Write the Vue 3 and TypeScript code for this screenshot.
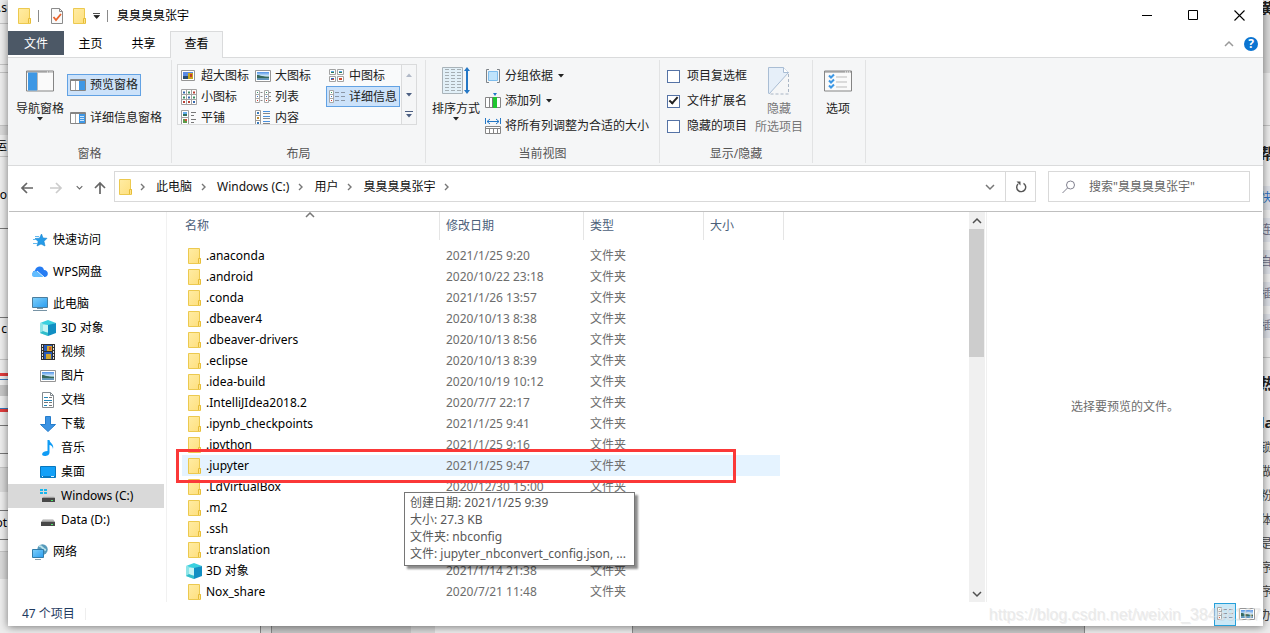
<script setup lang="ts">
import { ref } from 'vue'

interface Strip { size: number; kind: string; text?: string }
interface NavItem { label: string; icon: string; child?: boolean; selected?: boolean; gap?: boolean }
interface FileRow { name: string; date: string; type: string; icon: string; hover?: boolean }

const user = '臭臭臭臭张宇'
const search = ref('')
const showItemBoxes = ref(false)
const showExtensions = ref(true)
const showHidden = ref(false)

const layouts = [
  { label: '超大图标', icon: 'i-xlarge' }, { label: '大图标', icon: 'i-picture' }, { label: '中图标', icon: 'i-medium' },
  { label: '小图标', icon: 'i-small' }, { label: '列表', icon: 'i-list' }, { label: '详细信息', icon: 'i-details' },
  { label: '平铺', icon: 'i-tiles' }, { label: '内容', icon: 'i-content' },
]

const crumbs = ['此电脑', 'Windows (C:)', '用户', user]

const nav: NavItem[] = [
  { label: '快速访问', icon: 'i-star' },
  { label: 'WPS网盘', icon: 'i-cloud', gap: true },
  { label: '此电脑', icon: 'i-pc', gap: true },
  { label: '3D 对象', icon: 'i-cube', child: true },
  { label: '视频', icon: 'i-video', child: true },
  { label: '图片', icon: 'i-picture', child: true },
  { label: '文档', icon: 'i-doc', child: true },
  { label: '下载', icon: 'i-download', child: true },
  { label: '音乐', icon: 'i-music', child: true },
  { label: '桌面', icon: 'i-desktop', child: true },
  { label: 'Windows (C:)', icon: 'i-windrive', child: true, selected: true },
  { label: 'Data (D:)', icon: 'i-drive', child: true },
  { label: '网络', icon: 'i-network', gap: true },
]

const f = (name: string, date = '', icon = 'i-folder', hover = false): FileRow => ({ name, date, type: date ? '文件夹' : '', icon, hover })
const files: FileRow[] = [
  f('.anaconda', '2021/1/25 9:20'),
  f('.android', '2020/10/22 23:18'),
  f('.conda', '2021/1/26 13:57'),
  f('.dbeaver4', '2020/10/13 8:38'),
  f('.dbeaver-drivers', '2020/10/13 8:56'),
  f('.eclipse', '2020/10/13 8:39'),
  f('.idea-build', '2020/10/19 10:12'),
  f('.IntelliJIdea2018.2', '2020/7/7 22:17'),
  f('.ipynb_checkpoints', '2021/1/25 9:41'),
  f('.ipython', '2021/1/25 9:16'),
  f('.jupyter', '2021/1/25 9:47', 'i-folder', true),
  f('.LdVirtualBox', '2020/12/30 15:00'),
  f('.m2'),
  f('.ssh'),
  f('.translation'),
  f('3D 对象', '2021/1/14 21:38', 'i-cube'),
  f('Nox_share', '2020/7/21 11:48'),
]

const leftStrip: Strip[] = [
  { size: 15, kind: 'plain', text: '.s' }, { size: 9, kind: 'line' }, { size: 41, kind: 'line' }, { size: 8, kind: 'line' },
  { size: 53, kind: 'line' }, { size: 9, kind: 'grey' }, { size: 22, kind: 'line', text: '运' }, { size: 28, kind: 'plain' },
  { size: 20, kind: 'plain', text: 'o' }, { size: 24, kind: 'dark' }, { size: 89, kind: 'dark' }, { size: 22, kind: 'plain', text: 'c' },
  { size: 20, kind: 'line' }, { size: 13, kind: 'plain' }, { size: 3, kind: 'red' }, { size: 3, kind: 'plain' }, { size: 1, kind: 'blue' },
  { size: 5, kind: 'plain' }, { size: 11, kind: 'mid' }, { size: 12, kind: 'plain' }, { size: 1, kind: 'blue' }, { size: 3, kind: 'red' },
  { size: 14, kind: 'dark' }, { size: 28, kind: 'dark' }, { size: 14, kind: 'line' }, { size: 24, kind: 'grey' }, { size: 19, kind: 'dark' },
  { size: 23, kind: 'plain', text: 'ot' }, { size: 6, kind: 'dark' }, { size: 12, kind: 'line' }, { size: 27, kind: 'grey' }, { size: 50, kind: 'plain' },
]
const rightStrip: Strip[] = [
  { size: 15, kind: 'bold', text: '黄' }, { size: 58, kind: 'grey' }, { size: 53, kind: 'line' }, { size: 16, kind: 'plain' },
  { size: 22, kind: 'bold', text: '帮' }, { size: 22, kind: 'plain' }, { size: 24, kind: 'link', text: '快' }, { size: 8, kind: 'plain' },
  { size: 24, kind: 'tag', text: '连' }, { size: 8, kind: 'plain' }, { size: 24, kind: 'tag', text: '自' }, { size: 8, kind: 'plain' },
  { size: 24, kind: 'tag', text: '插' }, { size: 8, kind: 'plain' }, { size: 24, kind: 'tag', text: '插' }, { size: 20, kind: 'line' },
  { size: 14, kind: 'plain' }, { size: 22, kind: 'bold', text: '热' }, { size: 16, kind: 'plain' }, { size: 24, kind: 'bold', text: 'la' },
  { size: 2, kind: 'plain' }, { size: 24, kind: 'plain', text: '锁' }, { size: 24, kind: 'plain', text: '做' }, { size: 24, kind: 'plain', text: '粉' },
  { size: 24, kind: 'plain', text: '体' }, { size: 24, kind: 'plain', text: '是' }, { size: 24, kind: 'plain', text: '序' },
  { size: 24, kind: 'plain', text: '序' }, { size: 24, kind: 'plain', text: '办' },
]
const bottomStrip: Strip[] = [
  { size: 261, kind: 'plain' }, { size: 10, kind: 'grey' }, { size: 139, kind: 'mid open' }, { size: 24, kind: 'grey open' },
  { size: 198, kind: 'plain' }, { size: 452, kind: 'mid' }, { size: 186, kind: 'plain open' },
]
</script>

<template>
  <svg class="defs" aria-hidden="true">
    <defs>
      <linearGradient id="g-folder" x1="0" y1="0" x2="1" y2="1"><stop offset="0" stop-color="#ffeca4" /><stop offset="1" stop-color="#fedf7c" /></linearGradient>
      <linearGradient id="g-screen" x1="0" y1="0" x2="1" y2="1"><stop offset="0" stop-color="#7fd0fa" /><stop offset="1" stop-color="#2a9df0" /></linearGradient>
      <linearGradient id="g-sky" x1="0" y1="0" x2="0" y2="1"><stop offset="0" stop-color="#4f92e8" /><stop offset=".5" stop-color="#d4ebf8" /><stop offset=".6" stop-color="#6f9d98" /><stop offset="1" stop-color="#5d94c8" /></linearGradient>
      <linearGradient id="g-drive" x1="0" y1="0" x2="0" y2="1"><stop offset="0" stop-color="#e2e2e2" /><stop offset="1" stop-color="#8b8b8b" /></linearGradient>
    </defs>
    <symbol id="i-folder" viewBox="0 0 16 16"><path d="M2.500.5h11v10h1v5h-12z" fill="url(#g-folder)" stroke="#ecc94f" /><path d="M12.500 15v-4.500h2V15" fill="#ffe48c" stroke="#e6bd39" /></symbol>
    <symbol id="i-check-doc" viewBox="0 0 16 16"><path d="M2.500.5h8l3 3v12h-11z" fill="#fafafa" stroke="#8b8b8b" /><path d="M10.500.5v3h3" fill="none" stroke="#8b8b8b" /><path d="m4.500 9 2.500 3 5-6" fill="none" stroke="#e8632c" stroke-width="1.800" /></symbol>
    <symbol id="i-picture" viewBox="0 0 16 16"><path d="M.5 2.500h15v11H.5z" fill="#fff" stroke="#959595" /><path d="M2 4h12v8H2z" fill="url(#g-sky)" /><path d="M2 7c3 0 6 2 12 2v1H2z" fill="#37685b" /></symbol>
    <symbol id="i-xlarge" viewBox="0 0 16 16"><path d="M.5 2.500h13v10H.5z" fill="#fff" stroke="#959595" /><path d="M2 4h10v7H2z" fill="#5a8ae4" /><path d="M7 5h5v6H7z" fill="#c7a51f" /><path d="M9 6h2v3H9z" fill="#c43b28" /><path d="M2 8h5v3H2z" fill="#294c70" /></symbol>
    <symbol id="i-medium" viewBox="0 0 16 16"><g fill="#fff" stroke="#a2a2a2"><path d="M.5 1.500h6v5h-6zM8.500 1.500h6v5h-6zM.5 8.500h6v5h-6zM8.500 8.500h6v5h-6z" /></g><path d="M2 3h3v1H2zM10 3h3v1h-3z" fill="#5aa6ec" /><path d="M2 4h3v1H2zM10 4h3v1h-3z" fill="#2f7c55" /><path d="M2 10h3v2H2z" fill="#3962b5" /><path d="M3 11h2v1H3zM10 10h3v2h-3z" fill="#d14b2d" /></symbol>
    <symbol id="i-small" viewBox="0 0 16 16"><path d="M.5.5h15v15H.5zM5.500.5v15M10.500.5v15M.5 5.500h15M.5 10.500h15" fill="#fff" stroke="#a2a2a2" /><path d="M2 2.500h2v2H2zM7 7.500h2v2H7zM12 12h2v2h-2z" fill="#3467ae" /><path d="M7 2.500h2v2H7zM2 7.500h2v2H2zM12 7.500h2v2h-2z" fill="#368d60" /><path d="M12 2.500h2v2h-2zM2 12h2v2H2zM7 12h2v2H7z" fill="#b93e33" /></symbol>
    <symbol id="i-list" viewBox="0 0 16 16"><path d="M.5 1.500h4v12h-4zM9.500 1.500h4v12h-4zM.5 5.500h4M.5 9.500h4M9.500 5.500h4M9.500 9.500h4" fill="#fff" stroke="#aaa" /><path d="M5.500 3.500h2M5.500 7.500h2M5.500 11.500h2M14 3.500h2M14 7.500h2M14 11.500h2" stroke="#888" /><path d="M2 3h1v1H2zM11 3h1v1h-1z" fill="#34966a" /><path d="M2 7h1v1H2zM11 7h1v1h-1z" fill="#3775cc" /><path d="M2 11h1v1H2zM11 11h1v1h-1z" fill="#d03a2c" /></symbol>
    <symbol id="i-details" viewBox="0 0 16 16"><path d="M.5 1.500h4v12h-4zM.5 5.500h4M.5 9.500h4" fill="#fff" stroke="#a8a8a8" /><path d="M6 3.500h4M6 7.500h4M6 11.500h4M12 3.500h4M12 7.500h4M12 11.500h4" stroke="#8b97a7" /><path d="M2 3h1v1H2z" fill="#33a060" /><path d="M2 7h1v1H2z" fill="#3776c4" /><path d="M2 11h1v1H2z" fill="#d7332d" /></symbol>
    <symbol id="i-tiles" viewBox="0 0 16 16"><path d="M.5.5h7v7h-7zM.5 7.500h7v7h-7z" fill="#fff" stroke="#a0a0a0" /><path d="M2 2h4v2H2z" fill="#63acec" /><path d="M2 4h4v2H2z" fill="#316e5e" /><path d="M2 9h4v4H2z" fill="#5c9a48" /><path d="M4 9h2v2H4z" fill="#d0503b" /><path d="M10 2.500h5M10 5.500h3M10 9.500h5M10 12.500h3" stroke="#777" /></symbol>
    <symbol id="i-content" viewBox="0 0 16 16"><path d="M.5.5h5v15h-5zM.5 5.500h5M.5 10.500h5" fill="#fff" stroke="#9a9a9a" /><path d="M2 2h2v2H2zM2 12h2v2H2z" fill="#3678ba" /><path d="M2 7h2v2H2z" fill="#bc8b2e" /><path d="M8 1.500h7M8 6.500h7M8 11.500h7" stroke="#4a90dc" /><path d="M8 3.500h7M8 8.500h7M8 13.500h7" stroke="#888" /></symbol>
    <symbol id="i-navpane" viewBox="0 0 28 21"><path d="M.5.5h27v20H.5z" fill="#fafafa" stroke="#858585" /><path d="M1 1h26v1H1z" fill="#858585" /><path d="M21 1.500h1M23.500 1.500h1M25.500 1.500h1" stroke="#fff" /><path d="M2 2h9v18H2z" fill="#3d97e4" /><path d="M11.500 2v18" stroke="#b9b9b9" /></symbol>
    <symbol id="i-prevpane" viewBox="0 0 16 16"><path d="M.5 2.500h15v11H.5z" fill="#fff" stroke="#858585" /><path d="M1 3h14v1H1z" fill="#858585" /><path d="M5.500 4v9" stroke="#aaa" /><path d="M9 4h6v9H9z" fill="#3f98e6" /></symbol>
    <symbol id="i-detpane" viewBox="0 0 16 16"><path d="M.5 2.500h15v11H.5z" fill="#fff" stroke="#858585" /><path d="M1 3h14v1H1z" fill="#858585" /><path d="M5.500 4v9" stroke="#aaa" /><path d="M9 4h6v9H9z" fill="#3f98e6" /><path d="M10 6.500h4M10 8.500h4M10 10.500h4" stroke="#cfe6fb" /></symbol>
    <symbol id="i-sort" viewBox="0 0 28 28"><path d="M.5.5h20v26H.5z" fill="#f1f6f9" stroke="#a9b3b9" /><path d="M1 1h19v25H1z" fill="#d9edf7" opacity=".6" /><path d="M3 2.500h4M9 2.500h4M15 2.500h4M3 5.500h4M9 5.500h4M15 5.500h4M3 8.500h4M9 8.500h4M15 8.500h4M3 11.500h4M9 11.500h4M15 11.500h4M3 14.500h4M9 14.500h4M15 14.500h4M3 17.500h4M9 17.500h4M15 17.500h4M3 20.500h4M9 20.500h4M15 20.500h4M3 23.500h4M9 23.500h4M15 23.500h4" stroke="#a5aeb3" /><path d="M25 3v21" stroke="#2477c5" stroke-width="2" /><path d="m22 4 3-4 3 4zM22 23l3 4 3-4z" fill="#2477c5" /></symbol>
    <symbol id="i-group" viewBox="0 0 16 16"><path d="M4 1.500H1.500v13H4M12 1.500h2.500v13H12" fill="none" stroke="#7d8388" /><path d="M3.500 3.500h9v9h-9z" fill="#bfe3fb" stroke="#7dbcec" /></symbol>
    <symbol id="i-addcol" viewBox="0 0 16 16"><path d="M.5 4.500h15v10H.5zM4.500 4v11" fill="#fff" stroke="#858585" /><path d="M8 4h4v11H8z" fill="#20c630" /><path d="M7.500 4v11" stroke="#777" /><path d="M8 0h4l-2 3z" fill="#2477c5" /></symbol>
    <symbol id="i-fit" viewBox="0 0 16 16"><path d="M.5 0v6M15.500 0v6M2 3.500h12M5 1 2 3.500 5 6M11 1l3 2.500L11 6" fill="none" stroke="#2477c5" /><path d="M.5 8.500h15v7H.5zM.5 10.500h15M4.500 10.500v5M8.500 10.500v5M12.500 10.500v5" fill="#fff" stroke="#858585" /></symbol>
    <symbol id="i-hide" viewBox="0 0 22 28"><path d="M.5 26.500V.5h15l5 5L1 27" fill="#e6eff9" stroke="#a9bdd4" /><path d="M15.500.5v5h5" fill="#fff" stroke="#a9bdd4" /><path d="M20.500 7v20H1" fill="none" stroke="#a9b5c4" stroke-dasharray="3 2" /></symbol>
    <symbol id="i-options" viewBox="0 0 28 21"><path d="M.5.5h27v20H.5z" fill="#fafafa" stroke="#858585" /><path d="M1 1h26v1H1z" fill="#858585" /><path d="M21 1.500h1M23 1.500h1M25 1.500h1" stroke="#fff" /><path d="m5 5 2 2 3-3M5 10l2 2 3-3M5 15l2 2 3-3" fill="none" stroke="#3d97e4" stroke-width="2" /><path d="M12 6.500h11M12 11.500h11M12 16.500h11" stroke="#bbb" /></symbol>
    <symbol id="i-star" viewBox="0 0 16 16"><path d="m9.500 2 1.500 4 4 .3-3 3 1 4.700-4-2-4 2 1.200-4.500L3 6.500l4.500-.3z" fill="#259be8" stroke="#1683ce" stroke-width=".6" /><path d="M3 4.500h4M1 7.500h3M1 11.500h4" stroke="#62b9f0" /></symbol>
    <symbol id="i-cloud" viewBox="0 0 16 16"><path d="M3.500 13A3.300 3.300 0 0 1 3 6.500C4 1.500 11 1 12 6c5 0 5 7 .5 7z" fill="#257cf3" /><path d="M0 11c0-4 4-5 6-3l6 5H3c-2 0-3-1-3-2z" fill="#62bdff" /><path d="m5 7 7 6" stroke="#e5f5ff" /></symbol>
    <symbol id="i-pc" viewBox="0 0 16 16"><path d="M.5 1.500h15v10H.5z" fill="url(#g-screen)" stroke="#4b7d9d" /><path d="M5 12.500h6M1 14.500h14" stroke="#7793a5" /></symbol>
    <symbol id="i-cube" viewBox="0 0 16 16"><path d="M0 3 8 0l8 3-8 3z" fill="#3ad0df" /><path d="M0 3l8 2v11l-8-3z" fill="#8ee5e8" /><path d="m8 5 8-2v10l-8 3z" fill="#118fc3" /><path d="M3 5h5v7H3z" fill="#c7f5f4" /><path d="m0 13 3-2 5 2v3z" fill="#31bdcb" /></symbol>
    <symbol id="i-video" viewBox="0 0 16 16"><path d="M1 0h14v16H1z" fill="#303030" /><path d="M2.500 1v15M13.500 1v15" stroke="#e2e2e2" stroke-dasharray="2 1" /><path d="M4 1h8v6H4zM4 8h8v7H4z" fill="#285bba" /><path d="M7 2h5v5H7zM6 10h5v5H6z" fill="#d2a62c" /><path d="M9 3h2v3H9z" fill="#d24d31" /></symbol>
    <symbol id="i-doc" viewBox="0 0 16 16"><path d="M2.500.5h8l3 3v12h-11z" fill="#fff" stroke="#838b90" /><path d="M10.500.5v3h3" fill="none" stroke="#838b90" /><path d="M4 5.500h4M4 8.500h8M4 13.500h3" stroke="#2487b9" /><path d="M9 5.500h3M4 10.500h4M9 10.500h3M9 13.500h3" stroke="#777" /></symbol>
    <symbol id="i-download" viewBox="0 0 16 16"><path d="M5.500.5h5v8h5L8 15.500.5 8.500h5z" fill="#3c93e3" stroke="#257dcc" /></symbol>
    <symbol id="i-music" viewBox="0 0 16 16"><path d="M7.500 0h2c0 3 5 4 3.500 9-.5-3-2-4-3.500-4v7.500C9.500 15 7 16 5 16c-5 0-3-5 2.500-5z" fill="#109cf5" /></symbol>
    <symbol id="i-desktop" viewBox="0 0 16 16"><path d="M.5 2.500h15v11H.5z" fill="#12a0f8" stroke="#0877bd" /><path d="M1 12.500h14" stroke="#087ac4" /><path d="M2 12h1v1H2zM11 12h3v1h-3z" fill="#d9f1ff" /></symbol>
    <symbol id="i-drive" viewBox="0 0 16 16"><path d="m3 7 10 0 2 3H1z" fill="url(#g-drive)" /><path d="M1 10h14v4H1z" fill="#484848" /><path d="M11 12h2v1h-2z" fill="#4dea69" /></symbol>
    <symbol id="i-windrive" viewBox="0 0 16 16"><path d="M0 1h3v2H0zM4 1h3v2H4zM0 4h3v2H0zM4 4h3v2H4z" fill="#17b6ed" /><path d="m4 8 10 0 1 2H2z" fill="url(#g-drive)" /><path d="M2 10h13v4H2z" fill="#484848" /><path d="M11 12h2v1h-2z" fill="#4dea69" /></symbol>
    <symbol id="i-network" viewBox="0 0 16 16"><circle cx="10.500" cy="5.500" r="5.200" fill="#569abb" /><path d="M7 2c4 0 3 3 7 4" fill="none" stroke="#b9e2e9" stroke-width="2" /><path d="M.5 5.500h11v8H.5z" fill="url(#g-screen)" stroke="#317caa" /><path d="M3 15.500h6" stroke="#8ba0ac" /></symbol>
    <symbol id="i-caret" viewBox="0 0 6 4"><path d="M0 0h6L3 3.500z" fill="currentColor" /></symbol>
    <symbol id="i-chev" viewBox="0 0 10 10"><path d="m1 3 4 4 4-4" fill="none" stroke="currentColor" stroke-width="1.500" /></symbol>
    <symbol id="i-chevup" viewBox="0 0 10 10"><path d="m1 7 4-4 4 4" fill="none" stroke="currentColor" stroke-width="1.500" /></symbol>
    <symbol id="i-sep" viewBox="0 0 6 8"><path d="m1 1 3 3-3 3" fill="none" stroke="currentColor" stroke-width="1.400" /></symbol>
    <symbol id="i-arrow" viewBox="0 0 14 12"><path d="M13 6H2M7 1 2 6l5 5" fill="none" stroke="currentColor" stroke-width="1.700" /></symbol>
  </svg>

  <div class="desktop">
    <div class="strip left" aria-hidden="true">
      <div v-for="(s, i) in leftStrip" :key="i" :class="s.kind" :style="{ height: s.size + 'px' }"><span>{{ s.text }}</span></div>
    </div>

    <main class="window">
      <header class="titlebar">
        <svg class="i16"><use href="#i-folder" /></svg>
        <span class="bar"></span>
        <button class="flat first" aria-label="属性"><svg class="i16"><use href="#i-check-doc" /></svg></button>
        <button class="flat" aria-label="新建文件夹"><svg class="i16"><use href="#i-folder" /></svg></button>
        <button class="flat" aria-label="自定义快速访问工具栏"><svg width="8" height="6" viewBox="0 0 8 6"><path d="M0 .5h7M1 2.500h5.500L3.700 5.500z" fill="#222" stroke="#222" stroke-width=".8" /></svg></button>
        <span class="bar"></span>
        <h1>{{ user }}</h1>
        <div class="winbtns">
          <button class="flat" aria-label="最小化"><svg width="11" height="11"><path d="M0 5.500h10" stroke="#000" /></svg></button>
          <button class="flat" aria-label="最大化"><svg width="11" height="11"><path d="M.5.5h9v9h-9z" fill="none" stroke="#000" /></svg></button>
          <button class="flat" aria-label="关闭"><svg width="11" height="11"><path d="m.5.5 10 10m0-10-10 10" stroke="#000" stroke-width="1.100" /></svg></button>
        </div>
      </header>

      <nav class="tabs">
        <button class="tab file">文件</button>
        <button class="tab">主页</button>
        <button class="tab">共享</button>
        <button class="tab active">查看</button>
        <div class="tabs-end">
          <button class="flat muted" aria-label="最小化功能区"><svg width="10" height="10"><use href="#i-chevup" /></svg></button>
          <button class="help" aria-label="帮助">?</button>
        </div>
      </nav>

      <section class="ribbon">
        <div class="group g-panes">
          <div class="tools">
            <button class="large"><svg width="28" height="28"><use href="#i-navpane" /></svg><span>导航窗格</span><svg class="caret"><use href="#i-caret" /></svg></button>
            <div class="col panes">
              <button class="small on"><svg class="i16"><use href="#i-prevpane" /></svg>预览窗格</button>
              <button class="small"><svg class="i16"><use href="#i-detpane" /></svg>详细信息窗格</button>
            </div>
          </div>
          <p>窗格</p>
        </div>
        <div class="group g-layout">
          <div class="tools">
            <div class="gallery">
              <div class="gallery-grid">
                <button v-for="l in layouts" :key="l.label" class="small" :class="{ on: l.label === '详细信息' }"><svg class="i16"><use :href="'#' + l.icon" /></svg>{{ l.label }}</button>
              </div>
              <div class="gallery-scroll">
                <button class="flat" aria-label="上一行"><svg class="caret up"><use href="#i-caret" /></svg></button>
                <button class="flat" aria-label="下一行"><svg class="caret"><use href="#i-caret" /></svg></button>
                <button class="flat" aria-label="更多"><svg width="8" height="7" viewBox="0 0 8 7"><path d="M0 .5h8" stroke="currentColor" /><path d="M1 3h6L4 6.500z" fill="currentColor" /></svg></button>
              </div>
            </div>
          </div>
          <p>布局</p>
        </div>
        <div class="group g-view">
          <div class="tools">
            <button class="large"><svg width="28" height="28"><use href="#i-sort" /></svg><span>排序方式</span><svg class="caret"><use href="#i-caret" /></svg></button>
            <div class="col">
              <button class="small"><svg class="i16"><use href="#i-group" /></svg>分组依据<svg class="caret"><use href="#i-caret" /></svg></button>
              <button class="small"><svg class="i16"><use href="#i-addcol" /></svg>添加列<svg class="caret"><use href="#i-caret" /></svg></button>
              <button class="small"><svg class="i16"><use href="#i-fit" /></svg>将所有列调整为合适的大小</button>
            </div>
          </div>
          <p>当前视图</p>
        </div>
        <div class="group g-show">
          <div class="tools">
            <div class="col checks">
              <label><input v-model="showItemBoxes" type="checkbox" />项目复选框</label>
              <label><input v-model="showExtensions" type="checkbox" />文件扩展名</label>
              <label><input v-model="showHidden" type="checkbox" />隐藏的项目</label>
            </div>
            <button class="large dim" disabled><svg width="22" height="28"><use href="#i-hide" /></svg><span>隐藏</span><span>所选项目</span></button>
          </div>
          <p>显示/隐藏</p>
        </div>
        <div class="group g-options">
          <div class="tools">
            <button class="large"><svg width="28" height="28"><use href="#i-options" /></svg><span>选项</span></button>
          </div>
        </div>
      </section>

      <div class="address">
        <button class="flat" aria-label="后退"><svg width="14" height="12"><use href="#i-arrow" /></svg></button>
        <button class="flat faint" aria-label="前进"><svg class="flip" width="14" height="12"><use href="#i-arrow" /></svg></button>
        <button class="flat" aria-label="最近浏览的位置"><svg width="7" height="7"><use href="#i-chev" /></svg></button>
        <button class="flat" aria-label="上移"><svg width="12" height="14" viewBox="0 0 12 14"><path d="M6 13V2M1 7l5-5 5 5" fill="none" stroke="currentColor" stroke-width="1.700" /></svg></button>
        <div class="path">
          <svg class="i16"><use href="#i-folder" /></svg>
          <svg class="sep root"><use href="#i-sep" /></svg>
          <template v-for="c in crumbs" :key="c">
            <a href="#">{{ c }}</a>
            <svg class="sep"><use href="#i-sep" /></svg>
          </template>
          <button class="flat drop" aria-label="以前的位置"><svg width="10" height="10"><use href="#i-chev" /></svg></button>
          <button class="flat refresh" aria-label="刷新"><svg width="12" height="12" viewBox="0 0 12 12"><path d="M8.500 2.300A4.500 4.500 0 1 1 3 3" fill="none" stroke="currentColor" stroke-width="1.400" /><path d="M4.500.5h-4v4z" fill="currentColor" transform="rotate(90 3 3)" /></svg></button>
        </div>
        <label class="search">
          <svg width="14" height="14" viewBox="0 0 14 14"><circle cx="8.500" cy="5" r="4" fill="none" stroke="#81818f" /><path d="m5.500 8-5 5" stroke="#81818f" /></svg>
          <input v-model="search" type="text" aria-label="搜索" :placeholder="`搜索&quot;${user}&quot;`" />
        </label>
      </div>

      <div class="body">
        <nav class="tree">
          <a v-for="n in nav" :key="n.label" href="#" :class="{ child: n.child, selected: n.selected, gap: n.gap }">
            <svg class="i16"><use :href="'#' + n.icon" /></svg>{{ n.label }}
          </a>
        </nav>

        <section class="list">
          <table>
            <thead>
              <tr>
                <th class="c-name">名称<svg class="sorted" width="10" height="10"><use href="#i-chevup" /></svg></th>
                <th class="c-date">修改日期</th>
                <th class="c-type">类型</th>
                <th class="c-size">大小</th>
              </tr>
            </thead>
            <tbody>
              <tr v-for="r in files" :key="r.name" :class="{ hover: r.hover }">
                <td><div class="name"><svg class="i16"><use :href="'#' + r.icon" /></svg>{{ r.name }}</div></td>
                <td>{{ r.date }}</td>
                <td>{{ r.type }}</td>
                <td></td>
              </tr>
            </tbody>
          </table>
          <div class="marker"></div>
          <div class="tooltip" role="tooltip">
            <div>创建日期: 2021/1/25 9:39</div>
            <div>大小: 27.3 KB</div>
            <div>文件夹: nbconfig</div>
            <div>文件: jupyter_nbconvert_config.json, ...</div>
          </div>
        </section>

        <div class="scrollbar">
          <button class="flat" aria-label="向上滚动"><svg width="10" height="10"><use href="#i-chevup" /></svg></button>
          <div class="track"><div class="thumb"></div></div>
          <button class="flat" aria-label="向下滚动"><svg width="10" height="10"><use href="#i-chev" /></svg></button>
        </div>

        <aside class="preview">选择要预览的文件。</aside>
      </div>

      <footer class="status">
        <span class="count">47 个项目</span>
        <div class="modes">
          <button class="mode on" aria-label="详细信息"><svg class="i16"><use href="#i-details" /></svg></button>
          <button class="mode" aria-label="大缩略图"><svg class="i16"><use href="#i-picture" /></svg></button>
        </div>
      </footer>
    </main>

    <div class="strip right" aria-hidden="true">
      <div v-for="(s, i) in rightStrip" :key="i" :class="s.kind" :style="{ height: s.size + 'px' }"><span>{{ s.text }}</span></div>
    </div>
    <div class="bottom" aria-hidden="true">
      <div v-for="(s, i) in bottomStrip" :key="i" :class="s.kind" :style="{ flexGrow: s.size }"></div>
    </div>
    <div class="watermark">https://blog.csdn.net/weixin_38468167</div>
  </div>
</template>

<style>
body { background: #ededed; }
</style>

<style scoped>
.defs { position: absolute; width: 0; height: 0; }
.desktop {
  position: relative; display: grid; grid-template: minmax(0, 1fr) 7px / 8px minmax(0, 1fr) 7px;
  height: 100vh; overflow: hidden; background: #ededed; color: #000;
  font: 12px/16px "Noto Sans", "Noto Sans CJK SC", sans-serif;
}
button, input { font: inherit; color: inherit; margin: 0; padding: 0; }
button { border: 0; background: none; white-space: nowrap; }
a { color: inherit; text-decoration: none; }
svg { flex: none; display: block; }
.i16 { width: 16px; height: 16px; }
.caret { width: 6px; height: 4px; }
.flat { display: flex; align-items: center; justify-content: center; }
.muted { color: #999; }

.strip { overflow: hidden; min-height: 0; background: #ededed; }
.strip > div { box-sizing: border-box; display: flex; align-items: center; overflow: hidden; white-space: nowrap; }
.left > div { justify-content: flex-end; padding-right: 1px; }
.right span { margin-left: -3px; color: #444; }
.line { border-bottom: 1px solid #c4c4c4; }
.dark { border-bottom: 1px solid #777; }
.grey { background: #d9d9d9; }
.mid { background: #c6c6c6; }
.red { background: #e03c3c; }
.blue { background: #3576b8; }
.right .tag { background: #dcdfe6; }
.right .tag span { color: #6f7189; }
.right .link { background: #dcdfe6; }
.right .link span { color: #2a6fc0; }
.right .bold span { font-weight: 700; font-size: 15px; color: #222; }
.bottom { grid-column: 1 / 4; display: flex; }
.bottom > div { box-sizing: border-box; flex-basis: 0; border-right: 1px solid #888; }
.bottom > .open { border-right: 0; }

.window { position: relative; z-index: 1; display: flex; flex-direction: column; min-height: 0; background: #fff; box-shadow: 0 1px 8px rgba(0, 0, 0, .5); }

.titlebar { display: flex; align-items: center; height: 31px; padding-left: 8px; gap: 6px; }
.titlebar .bar { width: 1px; height: 12px; background: #8a8a8a; }
.titlebar .first { margin-left: 4px; }
.titlebar h1 { margin: 0 0 0 3px; font-size: 12px; font-weight: 400; }
.winbtns { display: flex; margin: 0 1px 0 auto; }
.winbtns .flat { width: 46px; height: 30px; }

.tabs { box-sizing: border-box; display: flex; height: 27px; border-bottom: 1px solid #dadbdc; }
.tab { width: 53px; height: 24px; padding-top: 1px; }
.tab.file { width: 56px; background: #4c5866; color: #fff; }
.tab.active { box-sizing: border-box; height: 27px; padding: 0 0 2px; background: #f5f6f7; border: 1px solid #dadbdc; border-bottom: 0; }
.tabs-end { display: flex; align-items: center; gap: 10px; margin-left: auto; padding-right: 5px; }
.help { width: 14px; height: 14px; border-radius: 7px; background: #0b74d1; color: #fff; font-weight: 700; line-height: 14px; }

.ribbon { display: flex; height: 107px; background: #f5f6f7; border-bottom: 1px solid #dadbdc; }
.group { box-sizing: border-box; display: flex; flex-direction: column; flex: none; margin: 2px 0; border-right: 1px solid #e2e3e4; }
.group p { margin: 0; line-height: 18px; text-align: center; color: #555; }
.tools { display: flex; flex: 1; min-height: 0; }
.g-panes { width: 164px; }
.g-layout { width: 254px; }
.g-view { width: 234px; }
.g-show { width: 153px; }
.g-options { width: 53px; }
.large { display: flex; flex-direction: column; align-items: center; width: 48px; margin: 7px 0 0 6px; color: #222; }
.large span { margin: 6px 0 0; line-height: 16px; }
.large span + span { margin: 2px 0 0; }
.g-panes .large { margin-left: 8px; }
.g-options .large { width: 50px; margin-left: 0; }
.large.dim { color: #777; margin-left: 8px; }
.small { box-sizing: border-box; display: flex; align-items: center; gap: 4px; height: 22px; padding: 0 2px; border: 1px solid transparent; color: #222; }
.small .caret { margin-left: 1px; }
.small.on { border-color: #62a2e4; background: #cce2fa; }
.col { display: flex; flex-direction: column; align-items: flex-start; gap: 3px; margin-top: 5px; }
.panes { gap: 11px; margin: 14px 0 0 3px; }
.g-view .col { margin-left: 2px; }
.checks { margin-left: 7px; }
.checks label { display: flex; align-items: center; height: 22px; gap: 7px; color: #222; }
.checks input { appearance: none; display: grid; place-items: center; width: 13px; height: 13px; border: 1px solid #5573a6; background: #fff; }
.checks input:checked::after { content: ""; width: 7px; height: 3px; margin-bottom: 3px; border: solid #222; border-width: 0 0 2px 2px; transform: rotate(-48deg); }
.gallery { box-sizing: border-box; display: flex; width: 240px; height: 61px; margin: 4px 0 0 5px; border: 1px solid #dadbdc; overflow: hidden; }
.gallery-grid { display: grid; grid-template-columns: repeat(3, 74px); grid-auto-rows: 21px; flex: 1; background: #f9fafb; }
.gallery-grid .small { height: 21px; }
.gallery-scroll { display: flex; flex-direction: column; width: 14px; border-left: 1px solid #dadbdc; color: #4c5f82; }
.gallery-scroll .flat { flex: 1; }
.up { transform: rotate(180deg); opacity: .4; }

.address { display: flex; align-items: center; height: 45px; padding: 0 12px 0 11px; color: #666; border-bottom: 1px solid #bfbfbf; margin: 0 1px; }
.address > .flat { margin: -2px 15px 0 0; }
.address > .flat:nth-of-type(2) { margin-right: 13px; }
.address > .flat:nth-of-type(3) { margin-right: 11px; }
.address > .flat:nth-of-type(4) { margin-right: 8px; }
.faint { color: #ccc; }
.flip { transform: scaleX(-1); }
.path { box-sizing: border-box; flex: 1; display: flex; align-items: center; height: 31px; padding-left: 2px; border: 1px solid #d9d9d9; color: #777; margin-top: -4px; }
.path a { color: #111; }
.sep { width: 6px; height: 8px; margin: 0 10px 0 9px; }
.sep.root { margin-left: 7px; }
.path .drop { margin-left: auto; width: 30px; height: 29px; }
.refresh { width: 30px; height: 29px; border-left: 1px solid #d9d9d9; color: #555; }
.search { box-sizing: border-box; display: flex; align-items: center; gap: 13px; width: 202px; height: 31px; margin: -4px 0 0 12px; padding-left: 13px; border: 1px solid #d9d9d9; }
.search input { flex: 1; min-width: 0; border: 0; outline: 0; background: none; }
.search input::placeholder { color: #666; opacity: 1; }

.body { flex: 1; min-height: 0; display: flex; overflow: hidden; }
.tree { box-sizing: border-box; flex: none; width: 159px; padding: 16px 2px 0 0; border-right: 1px solid #f1f1f1; overflow: hidden; }
.tree a { display: flex; align-items: center; gap: 5px; height: 24px; padding-left: 24px; white-space: nowrap; }
.tree a.gap { margin-top: 8px; }
.tree a.child { padding-left: 32px; }
.tree a.selected { background: #d9d9d9; }
.list { position: relative; flex: 1; min-width: 0; overflow: hidden; }
table { margin-left: 15px; border-collapse: separate; border-spacing: 0; table-layout: fixed; width: 602px; }
th { box-sizing: border-box; height: 28px; padding: 0 0 0 6px; text-align: left; font-weight: 400; color: #4c607a; border-right: 1px solid #e5e5e5; }
.c-name { width: 258px; padding-left: 3px; position: relative; }
.c-date { width: 144px; }
.c-type { width: 120px; }
.sorted { position: absolute; top: -2px; left: 50%; margin-left: -6px; color: #777; }
thead::after { content: ""; display: block; height: 5px; }
td { height: 21px; padding: 0 0 0 6px; color: #6d6d6d; white-space: nowrap; }
td:first-child { padding-left: 4px; color: #000; }
td:last-child { border-right: 4px solid #fff; }
.name { display: flex; align-items: center; gap: 4px; }
.hover { background: #e5f3ff; }
.marker { position: absolute; left: 9px; top: 237px; box-sizing: border-box; width: 560px; height: 34px; border: 3px solid #fb3838; }
.tooltip { position: absolute; left: 237px; top: 280px; padding: 1px 8px 3px 5px; border: 1px solid #767676; background: #fff; color: #575757; line-height: 17px; white-space: nowrap; box-shadow: 3px 3px 2px rgba(0, 0, 0, .45); }

.scrollbar { flex: none; display: flex; flex-direction: column; width: 16px; background: #f0f0f0; color: #505050; }
.scrollbar .flat { height: 17px; }
.track { flex: 1; padding-right: 1px; }
.thumb { height: 36%; background: #cdcdcd; }
.preview { flex: none; box-sizing: border-box; width: 277px; margin-left: 1px; border-left: 1px solid #f0f0f0; display: flex; align-items: center; justify-content: center; color: #6d6d6d; }

.status { display: flex; align-items: center; height: 24px; padding: 0 5px 0 14px; color: #1e3a5f; }
.count { padding-right: 10px; line-height: 12px; border-right: 1px solid #eee; }
.modes { display: flex; margin-left: auto; }
.mode { box-sizing: border-box; display: flex; align-items: center; justify-content: center; width: 22px; height: 23px; border: 1px solid transparent; }
.mode.on { border-color: #26a0da; background: #cbe8f6; }
.watermark { position: absolute; z-index: 2; right: 9px; bottom: 9px; font: 16px/18px "Liberation Sans", sans-serif; color: rgba(228, 228, 228, .7); text-shadow: 1px 1px 0 rgba(150, 150, 150, .15); pointer-events: none; }
</style>
